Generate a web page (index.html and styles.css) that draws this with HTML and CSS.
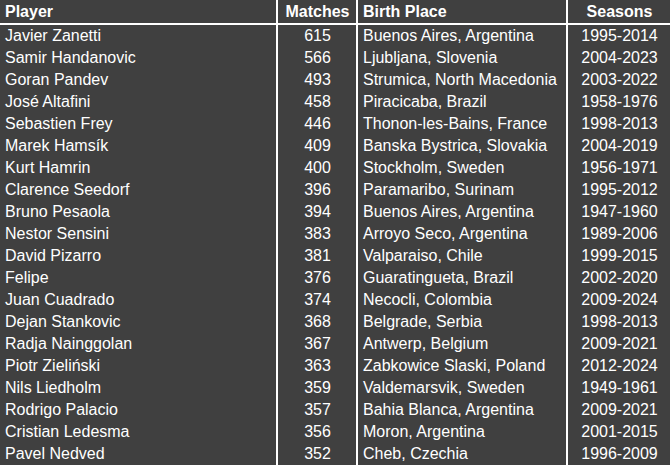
FILE: index.html
```html
<!DOCTYPE html>
<html>
<head>
<meta charset="utf-8">
<link rel="stylesheet" href="styles.css">
</head>
<body>
<table class="stats">
  <colgroup>
    <col class="c-player"><col class="c-matches"><col class="c-place"><col class="c-seasons">
  </colgroup>
  <thead>
    <tr><th class="left">Player</th><th class="mid">Matches</th><th class="left">Birth Place</th><th class="mid">Seasons</th></tr>
  </thead>
  <tbody>
    <tr><td>Javier Zanetti</td><td class="num">615</td><td>Buenos Aires, Argentina</td><td class="mid">1995-2014</td></tr>
    <tr><td>Samir Handanovic</td><td class="num">566</td><td>Ljubljana, Slovenia</td><td class="mid">2004-2023</td></tr>
    <tr><td>Goran Pandev</td><td class="num">493</td><td>Strumica, North Macedonia</td><td class="mid">2003-2022</td></tr>
    <tr><td>José Altafini</td><td class="num">458</td><td>Piracicaba, Brazil</td><td class="mid">1958-1976</td></tr>
    <tr><td>Sebastien Frey</td><td class="num">446</td><td>Thonon-les-Bains, France</td><td class="mid">1998-2013</td></tr>
    <tr><td>Marek Hamsík</td><td class="num">409</td><td>Banska Bystrica, Slovakia</td><td class="mid">2004-2019</td></tr>
    <tr><td>Kurt Hamrin</td><td class="num">400</td><td>Stockholm, Sweden</td><td class="mid">1956-1971</td></tr>
    <tr><td>Clarence Seedorf</td><td class="num">396</td><td>Paramaribo, Surinam</td><td class="mid">1995-2012</td></tr>
    <tr><td>Bruno Pesaola</td><td class="num">394</td><td>Buenos Aires, Argentina</td><td class="mid">1947-1960</td></tr>
    <tr><td>Nestor Sensini</td><td class="num">383</td><td>Arroyo Seco, Argentina</td><td class="mid">1989-2006</td></tr>
    <tr><td>David Pizarro</td><td class="num">381</td><td>Valparaiso, Chile</td><td class="mid">1999-2015</td></tr>
    <tr><td>Felipe</td><td class="num">376</td><td>Guaratingueta, Brazil</td><td class="mid">2002-2020</td></tr>
    <tr><td>Juan Cuadrado</td><td class="num">374</td><td>Necocli, Colombia</td><td class="mid">2009-2024</td></tr>
    <tr><td>Dejan Stankovic</td><td class="num">368</td><td>Belgrade, Serbia</td><td class="mid">1998-2013</td></tr>
    <tr><td>Radja Nainggolan</td><td class="num">367</td><td>Antwerp, Belgium</td><td class="mid">2009-2021</td></tr>
    <tr><td>Piotr Zieliński</td><td class="num">363</td><td>Zabkowice Slaski, Poland</td><td class="mid">2012-2024</td></tr>
    <tr><td>Nils Liedholm</td><td class="num">359</td><td>Valdemarsvik, Sweden</td><td class="mid">1949-1961</td></tr>
    <tr><td>Rodrigo Palacio</td><td class="num">357</td><td>Bahia Blanca, Argentina</td><td class="mid">2009-2021</td></tr>
    <tr><td>Cristian Ledesma</td><td class="num">356</td><td>Moron, Argentina</td><td class="mid">2001-2015</td></tr>
    <tr><td>Pavel Nedved</td><td class="num">352</td><td>Cheb, Czechia</td><td class="mid">1996-2009</td></tr>
  </tbody>
</table>
</body>
</html>
```
FILE: styles.css
```css
html, body {
  margin: 0;
  padding: 0;
  background: #ffffff;
}
.stats {
  border-collapse: collapse;
  table-layout: fixed;
  width: 670px;
  background: #404040;
  color: #ffffff;
  font-family: "Liberation Sans", Arial, sans-serif;
  font-size: 16px;
  line-height: 18px;
}
.c-player { width: 277px; }
.c-matches { width: 80px; }
.c-place { width: 210px; }
.c-seasons { width: 103px; }
.stats th, .stats td {
  padding: 2px 4px 2px 5px;
  white-space: nowrap;
  overflow: hidden;
  border-left: 2px solid #ffffff;
}
.stats th:first-child, .stats td:first-child {
  border-left: none;
}
.stats th {
  font-weight: bold;
  height: 19px;
  padding-top: 2px;
  padding-bottom: 2px;
  border-bottom: 2px solid #ffffff;
}
.stats td {
  height: 18px;
}
.left { text-align: left; }
.mid { text-align: center; }
.num { text-align: center; padding-right: 18px; }
```
